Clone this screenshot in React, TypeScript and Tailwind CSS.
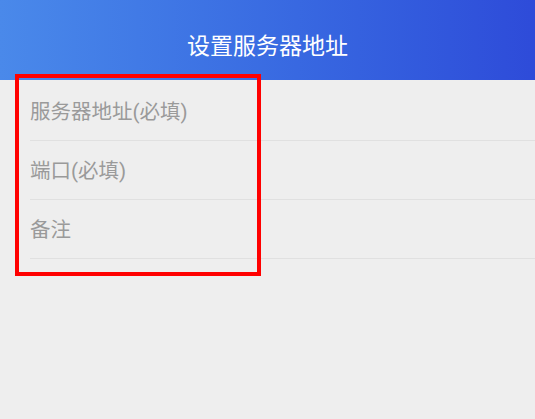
const fields = ["服务器地址(必填)", "端口(必填)", "备注"];

export default function App() {
  return (
    <div
      className="relative w-[535px] h-[419px] bg-[#eeeeee] overflow-hidden"
      style={{ fontFamily: 'Roboto, "Noto Sans CJK SC", sans-serif' }}
    >
      {/* Header */}
      <div className="h-[80px] flex items-center justify-center bg-gradient-to-r from-[#4a89ea] to-[#2e4bd9]">
        <h1 className="text-[23px] text-white pt-[14px]">设置服务器地址</h1>
      </div>

      {/* Form rows */}
      <div className="ml-[30px] mt-[2px]">
        {fields.map((label) => (
          <div
            key={label}
            className="h-[59px] flex items-center pt-[2px] border-b border-[#e0e0e0] text-[20.5px] text-[#9a9a9a]"
          >
            {label}
          </div>
        ))}
      </div>

      {/* Annotation box */}
      <div className="absolute left-[15px] top-[74px] w-[246px] h-[202px] border-[4px] border-[#ff0000]" />
    </div>
  );
}
